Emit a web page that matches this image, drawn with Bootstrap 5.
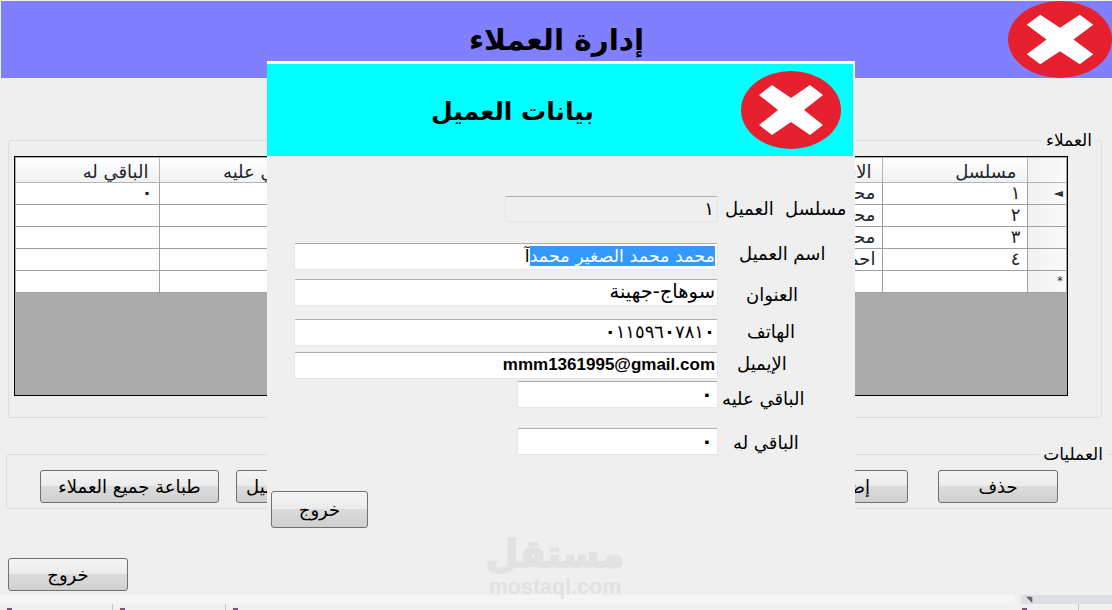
<!DOCTYPE html>
<html lang="ar">
<head>
    <meta charset="UTF-8">
    <meta name="viewport" content="width=device-width, initial-scale=1.0">
    <title>إدارة العملاء</title>
    <link href="https://cdn.jsdelivr.net/npm/bootstrap@5.3.0/dist/css/bootstrap.min.css" rel="stylesheet">
    <style>
        html, body { height: 610px; overflow: hidden; }
        body {
            position: relative;
            background: #efefef;
            color: #000;
            font-family: "DejaVu Sans", sans-serif;
            font-size: 15px;
        }
        .main-win { padding: 1px 0 0 1px; height: 595px; overflow: hidden; }
        .main-head {
            height: 77px;
            background: #8080ff;
            display: grid;
            grid-template-columns: 1fr auto 1fr;
            align-items: center;
        }
        .main-head h1 { font-size: 29.5px; font-weight: 700; margin: 0; padding-top: 3px; grid-column: 2; }
        .main-head svg { grid-column: 3; justify-self: end; }

        .group-box {
            border: 1px solid #d5dfe5;
            border-radius: 3px;
            min-width: 0;
        }
        .group-box legend {
            float: none;
            width: auto;
            font-size: 17px;
            line-height: 18px;
            margin: 0 0 0 auto;
            padding: 0 4px;
        }
        .clients-box { margin: 53px 0 0 7px; width: 1094px; height: 287px; padding: 7px 0 0 5px; }
        .clients-box legend { margin-right: 5px; }
        .ops-box { margin: 27px 0 0 5px; width: 1130px; height: 64px; padding: 7px 77px 0 33px; }
        .ops-box legend { margin-right: -49px; }

        .grid-box {
            width: 1054px;
            height: 240px;
            border: 1px solid #000;
            padding: 1px;
            background: #ababab;
        }
        .client-grid { table-layout: fixed; width: 1050px; margin: 0; background: #fff; }
        .client-grid th, .client-grid td {
            height: 22px;
            padding: 0 6px;
            border: 1px solid #a0a0a0;
            border-width: 0 1px 1px 0;
            font-size: 18px;
            font-weight: 400;
            line-height: 20px;
            text-align: right;
            white-space: nowrap;
            overflow: hidden;
            box-shadow: none;
        }
        .client-grid thead th {
            height: 24px;
            padding-right: 10px;
            background: linear-gradient(#ffffff, #f0f1f2);
            border-color: #b4b4b4;
        }
        .client-grid .row-mark {
            background: linear-gradient(90deg, #f1f1f4, #fafafa);
            border-right: 0;
            padding-right: 3px;
            font-size: 12px;
            color: #333;
        }
        .col-a { width: 143px; }
        .col-b { width: 157px; }
        .col-c { width: 200px; }
        .col-d { width: 120px; }
        .col-e { width: 100px; }
        .col-f { width: 146px; }
        .col-g { width: 145px; }
        .col-h { width: 39px; }

        /* the zero digit is a heavy diamond in the original font */
        .nil-digit { font-size: 20px; font-weight: 700; }

        .win-btn {
            height: 33px;
            padding: 0;
            border: 1px solid #707070;
            border-radius: 3px;
            background: linear-gradient(#f4f4f4, #ebebeb 49%, #dcdcdc 50%, #cfcfcf);
            color: #000;
            font-size: 18px;
            line-height: 30px;
        }
        .btn-print { width: 179px; }
        .btn-std { width: 120px; }
        .gap-print { margin-left: 17px; }
        .gap-delete { margin-left: 30px; }
        .main-exit { margin: 49px 0 0 7px; }

        .status-bar { height: 15px; position: relative; }
        .status-top { height: 9px; display: flex; gap: 6px; }
        .status-light { width: 1015px; background: #f5f5f5; }
        .status-scroll {
            flex: 1;
            background: #dcdfe3;
            color: #666;
            font-size: 8px;
            line-height: 9px;
            padding-left: 5px;
        }
        .status-tasks { height: 6px; background: #f0f0f0; display: flex; }
        .task-item { width: 113px; border-right: 1px solid #c4c4c4; padding: 4px 0 0 7px; }
        .task-item.is-last { border-right: 0; }
        .task-tray { width: 57px; border-right: 1px solid #c4c4c4; padding-top: 4px; margin-left: auto; margin-right: 33px; }
        .task-chip { display: block; width: 5px; height: 2px; background: linear-gradient(90deg, #d33, #36c); }

        /* the customer window sits on top of the main window */
        .client-win {
            position: absolute;
            left: 267px;
            top: 61px;
            width: 588px;
            height: 490px;
            background: #efefef;
            border-top: 3px solid #fff;
        }
        .client-head {
            height: 92px;
            background: #00ffff;
            margin-right: 2px;
            padding: 0 12px 0 164px;
            display: flex;
            align-items: center;
            justify-content: space-between;
        }
        .client-head h2 { font-size: 25px; font-weight: 700; margin: 0; padding-top: 4px; }
        .client-form { padding: 40px 0 0 27px; }
        .entry-row { display: flex; height: 27px; }
        .entry-slot { width: 424px; display: flex; justify-content: flex-end; flex: none; }
        .entry-box {
            width: 100%;
            height: 27px;
            padding: 0 2px;
            border: 1px solid #e3e6ea;
            border-top-color: #abadb3;
            border-radius: 2px;
            background: #fff;
            color: #000;
            font-size: 18px;
            line-height: 24px;
            text-align: right;
            white-space: nowrap;
            overflow: hidden;
            box-shadow: none;
        }
        .entry-box.is-serial { width: 213px; height: 26px; background: #efefef; padding-right: 3px; }
        .entry-box.is-short { width: 201px; padding-right: 4px; }
        .entry-box.is-name { font-size: 17.5px; }
        .entry-box.is-addr { font-size: 19.5px; }
        .entry-box.is-mail { font-family: "Liberation Sans", sans-serif; font-weight: 700; font-size: 17px; }
        .entry-box mark.picked { padding: 0; background: #3399ff; color: #fff; }
        .entry-label { font-size: 18px; line-height: 22px; white-space: nowrap; margin: 0; }

        .gap-name { margin-top: 20px; }
        .gap-addr { margin-top: 9px; }
        .gap-phone { margin-top: 13px; }
        .gap-mail { margin-top: 6px; }
        .gap-owes { margin-top: 2px; }
        .gap-owed { margin-top: 20px; }
        .lab-serial { margin-left: 7px; padding-top: 2px; }
        .lab-name { margin-left: 21px; }
        .lab-addr { margin-left: 28px; padding-top: 5px; }
        .lab-phone { margin-left: 29px; padding-top: 2px; }
        .lab-mail { margin-left: 19px; padding-top: 1px; }
        .lab-owes { margin-left: 4px; padding-top: 7px; }
        .lab-owed { margin-left: 15px; padding-top: 4px; }
        .client-exit { width: 97px; height: 37px; margin: 36px 0 0 -23px; }

        /* site watermark over both windows */
        .site-mark {
            position: absolute;
            left: 455px;
            top: 532px;
            width: 200px;
            text-align: center;
            color: #e2e2e2;
            pointer-events: none;
        }
        .site-mark b { display: block; font-size: 38px; line-height: 45px; -webkit-text-stroke: 1.5px #e2e2e2; }
        .site-mark i { display: block; font: 700 21.5px/20px "Liberation Sans", sans-serif; }
    </style>
</head>
<body>

    <div class="main-win">
        <div class="main-head">
            <h1>إدارة العملاء</h1>
            <svg width="104" height="77" viewBox="0 0 100 78" preserveAspectRatio="none"><ellipse cx="50" cy="39" rx="50" ry="39" fill="#e6202e"/><polygon fill="#fff" points="50,27 69,14 82,24 63,39 82,54 69,64 50,51 31,64 18,54 37,39 18,24 31,14"/></svg>
        </div>

        <fieldset class="group-box clients-box">
            <legend>العملاء</legend>
            <div class="grid-box">
                <table class="table client-grid">
                    <colgroup>
                        <col class="col-a"><col class="col-b"><col class="col-c"><col class="col-d"><col class="col-e"><col class="col-f"><col class="col-g"><col class="col-h">
                    </colgroup>
                    <thead>
                        <tr><th>الباقي له</th><th>الباقي عليه</th><th>الإيميل</th><th>الهاتف</th><th>العنوان</th><th>الاسم</th><th>مسلسل</th><th class="row-mark"></th></tr>
                    </thead>
                    <tbody>
                        <tr><td><b>٠</b></td><td><b>٠</b></td><td></td><td></td><td></td><td>محمد</td><td>١</td><td class="row-mark">◄</td></tr>
                        <tr><td></td><td></td><td></td><td></td><td></td><td>محمد</td><td>٢</td><td class="row-mark"></td></tr>
                        <tr><td></td><td></td><td></td><td></td><td></td><td>محمد</td><td>٣</td><td class="row-mark"></td></tr>
                        <tr><td></td><td></td><td></td><td></td><td></td><td>احمد</td><td>٤</td><td class="row-mark"></td></tr>
                        <tr><td></td><td></td><td></td><td></td><td></td><td></td><td></td><td class="row-mark">*</td></tr>
                    </tbody>
                </table>
            </div>
        </fieldset>

        <fieldset class="group-box ops-box">
            <legend>العمليات</legend>
            <div class="d-flex">
                <button type="button" class="btn win-btn btn-print">طباعة جميع العملاء</button>
                <button type="button" class="btn win-btn btn-std gap-print">طباعة العميل</button>
                <button type="button" class="btn win-btn btn-std ms-auto">إضافة</button>
                <button type="button" class="btn win-btn btn-std gap-delete">حذف</button>
            </div>
        </fieldset>

        <button type="button" class="btn win-btn btn-std main-exit d-block">خروج</button>
    </div>

    <div class="status-bar">
        <div class="status-top">
            <div class="status-light"></div>
            <div class="status-scroll">◥</div>
        </div>
        <div class="status-tasks">
            <div class="task-item"><span class="task-chip"></span></div>
            <div class="task-item"><span class="task-chip"></span></div>
            <div class="task-item is-last"><span class="task-chip"></span></div>
            <div class="task-tray"><span class="task-chip"></span></div>
        </div>
    </div>

    <div class="client-win">
        <div class="client-head">
            <h2>بيانات العميل</h2>
            <svg width="100" height="78" viewBox="0 0 100 78"><ellipse cx="50" cy="39" rx="50" ry="39" fill="#e6202e"/><polygon fill="#fff" points="50,27 69,14 82,24 63,39 82,54 69,64 50,51 31,64 18,54 37,39 18,24 31,14"/></svg>
        </div>
        <div class="client-form">
            <div class="entry-row">
                <div class="entry-slot"><div class="form-control entry-box is-serial">١</div></div>
                <label class="entry-label lab-serial">مسلسل&nbsp; العميل</label>
            </div>
            <div class="entry-row gap-name">
                <div class="entry-slot"><div class="form-control entry-box is-name"><mark class="picked">محمد محمد الصغير محمد</mark>آ</div></div>
                <label class="entry-label lab-name">اسم العميل</label>
            </div>
            <div class="entry-row gap-addr">
                <div class="entry-slot"><div class="form-control entry-box is-addr">سوهاج-جهينة</div></div>
                <label class="entry-label lab-addr">العنوان</label>
            </div>
            <div class="entry-row gap-phone">
                <div class="entry-slot"><div class="form-control entry-box"><b>٠</b>١١٥٩٦<b>٠</b>٧٨١<b>٠</b></div></div>
                <label class="entry-label lab-phone">الهاتف</label>
            </div>
            <div class="entry-row gap-mail">
                <div class="entry-slot"><div class="form-control entry-box is-mail">mmm1361995@gmail.com</div></div>
                <label class="entry-label lab-mail">الإيميل</label>
            </div>
            <div class="entry-row gap-owes">
                <div class="entry-slot"><div class="form-control entry-box is-short"><span class="nil-digit">٠</span></div></div>
                <label class="entry-label lab-owes">الباقي عليه</label>
            </div>
            <div class="entry-row gap-owed">
                <div class="entry-slot"><div class="form-control entry-box is-short"><span class="nil-digit">٠</span></div></div>
                <label class="entry-label lab-owed">الباقي له</label>
            </div>
            <button type="button" class="btn win-btn client-exit d-block">خروج</button>
        </div>
    </div>

    <div class="site-mark"><b>مستقل</b><i>mostaql.com</i></div>

</body>
</html>
